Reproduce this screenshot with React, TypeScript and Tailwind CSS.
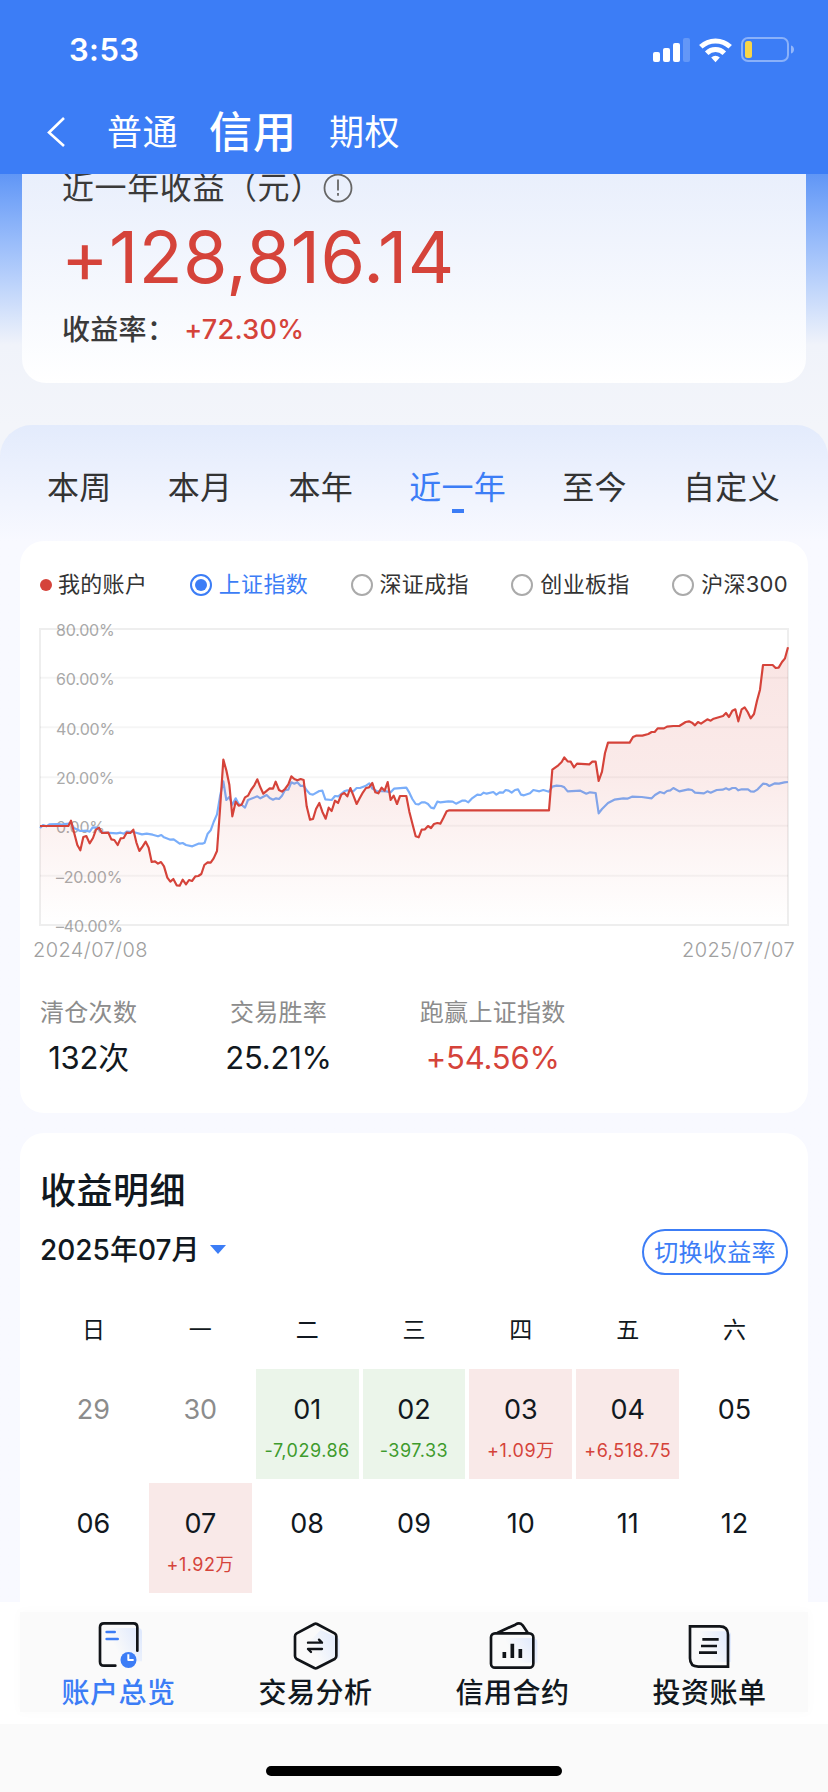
import { clsx } from 'clsx'

type Tone = 'up' | 'down'

interface Day {
  day: string
  muted?: boolean
  amount?: string
  tone?: Tone
}

const PERIODS = ['本周', '本月', '本年', '近一年', '至今', '自定义']
const INDEXES = ['上证指数', '深证成指', '创业板指', '沪深300']
const WEEKDAYS = ['日', '一', '二', '三', '四', '五', '六']
const Y_LABELS = ['80.00%', '60.00%', '40.00%', '20.00%', '0.00%', '–20.00%', '–40.00%']

const DAYS: Day[] = [
  { day: '29', muted: true },
  { day: '30', muted: true },
  { day: '01', amount: '-7,029.86', tone: 'down' },
  { day: '02', amount: '-397.33', tone: 'down' },
  { day: '03', amount: '+1.09万', tone: 'up' },
  { day: '04', amount: '+6,518.75', tone: 'up' },
  { day: '05' },
  { day: '06' },
  { day: '07', amount: '+1.92万', tone: 'up' },
  { day: '08' },
  { day: '09' },
  { day: '10' },
  { day: '11' },
  { day: '12' },
]

// Chart units: 2244 x 888, y = 0 is 80%, y = 888 is -40%
const ACCOUNT =
  '0,591 85,591 93,575 102,610 112,648 121,664 130,624 139,621 149,643 159,627 168,602 177,596 186,612 205,611 214,631 223,633 233,648 242,628 251,627 260,611 271,612 280,602 289,640 298,666 308,652 317,638 326,656 335,699 345,697 354,704 363,699 372,712 382,746 391,758 400,750 410,769 419,770 428,752 438,766 447,753 456,756 466,742 475,741 484,735 493,708 503,700 512,701 521,688 531,666 540,542 550,392 559,424 568,467 577,562 587,518 596,530 605,527 615,505 624,500 633,483 643,469 652,451 661,475 670,494 689,478 699,479 707,458 717,483 726,488 735,480 745,466 754,442 763,450 772,454 782,450 791,453 800,532 810,572 819,570 828,540 838,522 847,548 857,569 866,536 875,546 885,515 894,522 904,497 913,492 922,502 931,477 940,499 950,525 959,508 969,490 978,477 987,475 997,462 1006,490 1015,493 1025,476 1034,485 1043,459 1052,513 1061,500 1071,525 1080,501 1099,501 1108,548 1118,587 1127,622 1136,625 1145,602 1155,601 1164,591 1173,597 1182,585 1192,582 1201,584 1210,567 1220,547 1228,544 1527,544 1537,422 1555,409 1565,399 1573,385 1583,397 1592,398 1602,415 1611,404 1648,406 1657,398 1667,398 1676,456 1686,428 1695,372 1704,341 1769,341 1779,324 1788,320 1807,320 1825,315 1835,309 1844,309 1853,298 1872,298 1881,293 1900,291 1918,291 1937,279 1947,277 1956,281 1965,289 1974,279 1983,284 2002,271 2012,275 2021,269 2049,261 2058,252 2067,264 2077,245 2086,241 2095,277 2105,241 2114,235 2123,249 2132,268 2142,255 2151,215 2160,182 2169,108 2198,108 2207,117 2216,116 2226,99 2235,88 2244,55'

const INDEX =
  '0,597 9,588 19,592 28,586 56,585 65,587 84,584 93,582 102,597 121,606 140,605 149,608 158,595 170,596 186,610 230,613 242,611 252,614 260,608 280,609 306,616 320,614 338,617 354,622 364,618 372,625 391,632 401,631 419,644 428,642 438,648 457,652 475,644 487,644 494,641 503,614 512,604 521,579 531,556 540,502 550,457 559,513 568,504 577,527 587,508 596,525 605,528 615,536 624,513 652,502 661,508 680,498 689,507 699,512 708,508 717,510 726,500 735,483 745,482 754,460 763,464 772,460 782,471 791,470 800,484 810,495 819,497 838,486 847,485 856,511 875,513 885,501 895,502 913,487 922,484 940,487 950,477 960,477 978,470 988,463 997,479 1010,486 1040,487 1052,490 1062,479 1099,476 1108,491 1117,510 1127,525 1136,526 1145,520 1155,520 1164,525 1173,536 1182,538 1192,518 1201,520 1225,517 1238,518 1248,524 1266,515 1276,515 1285,520 1295,509 1312,497 1322,498 1331,491 1340,494 1360,489 1369,497 1379,490 1389,491 1397,483 1406,485 1415,491 1425,483 1434,481 1443,497 1452,499 1470,493 1480,483 1498,487 1510,483 1527,488 1537,473 1550,470 1564,471 1573,475 1583,487 1621,485 1639,494 1650,490 1667,492 1676,553 1686,540 1704,522 1723,512 1750,508 1762,509 1776,503 1805,504 1835,508 1845,498 1860,489 1872,493 1881,486 1891,484 1900,477 1918,487 1945,481 1956,483 1965,491 1992,493 2002,487 2012,491 2030,483 2048,482 2058,478 2067,482 2077,477 2087,477 2095,484 2105,481 2124,481 2132,487 2142,488 2153,481 2169,464 2179,465 2188,471 2205,463 2217,464 2233,460 2244,459'

function StatusBar() {
  return (
    <div className="flex h-[100px] items-center justify-between pr-[33px] pl-[69px]">
      <span className="text-[31px] font-semibold tracking-[0.4px]">3:53</span>
      <svg width="142" height="26" viewBox="0 0 142 26" fill="#fff">
        <rect x="0" y="15" width="7" height="10" rx="2" />
        <rect x="10" y="11" width="7" height="14" rx="2" />
        <rect x="20" y="6" width="7" height="19" rx="2" />
        <rect x="30" y="1" width="7" height="24" rx="2" opacity="0.2" />
        <g fill="none" stroke="#fff" strokeWidth="5">
          <path d="M47.8 9.8a21.2 21.2 0 0 1 29.4 0" />
          <path d="M53.7 16.2a12.5 12.5 0 0 1 17.6 0" />
        </g>
        <path d="M62.5 25.2l-4.3-4.6a6.2 6.2 0 0 1 8.6 0z" />
        <rect x="89" y="1" width="46" height="23" rx="6" fill="none" stroke="#fff" strokeOpacity="0.4" strokeWidth="2" />
        <rect x="92" y="4" width="7" height="17" rx="2.5" fill="#f8d548" />
        <path d="M138 8.5c4 1 4 7 0 8z" opacity="0.45" />
      </svg>
    </div>
  )
}

function Header() {
  return (
    <header className="h-[174px] bg-[#3c7df6] text-white">
      <StatusBar />
      <nav className="flex h-[64px] items-center pl-[46px]">
        <svg width="20" height="32" viewBox="0 0 20 32" fill="none" stroke="#fff" strokeWidth="2.6">
          <path d="M18 2L3 16.5 18 30" />
        </svg>
        <span className="ml-[41px] text-[35px] tracking-[0.5px]">普通</span>
        <span className="ml-[31px] text-[43px] font-medium tracking-[1px]">信用</span>
        <span className="ml-[32px] text-[35px] tracking-[0.5px]">期权</span>
      </nav>
    </header>
  )
}

function Summary() {
  return (
    <section className="h-[251px] bg-linear-to-b from-[#6096f6] via-[#f0f3fa] via-68% to-[#f3f5fa] px-[22px]">
      <div className="h-[209px] overflow-hidden rounded-b-[24px] bg-linear-to-b from-[#e9effc] to-white pl-[40px]">
        <div className="-mt-[6px] flex h-[40px] items-center text-[32px] tracking-[0.6px] text-[#3a3a3a]">
          近一年收益（元）
          <svg width="30" height="30" viewBox="0 0 30 30" fill="none" stroke="#666" strokeWidth="1.8">
            <circle cx="15" cy="15" r="13.5" />
            <path d="M15 6.5v11M15 20v2.8" />
          </svg>
        </div>
        <div className="mt-[13px] -ml-[1px] h-[72px] text-[72px] leading-[72px] tracking-[0.4px] text-[#d5433a]">+128,816.14</div>
        <div className="mt-[17px] flex h-[40px] items-center text-[28px] font-medium tracking-[0.3px] text-[#3a3a3a]">
          收益率：
          <span className="ml-[9px] text-[27px] text-[#d5433a]">+72.30%</span>
        </div>
      </div>
    </section>
  )
}

function Chart() {
  return (
    <div className="relative mx-[20px] mt-[18px] h-[297px]">
      <div className="absolute -top-[9px] left-[16px] flex h-[316px] flex-col justify-between text-[16px] leading-[20px] tracking-[-0.2px] text-[#aaa]">
        {Y_LABELS.map(label => (
          <span key={label}>{label}</span>
        ))}
      </div>
      <svg className="relative overflow-visible" width="748" height="296" viewBox="0 0 2244 888">
        <defs>
          <linearGradient id="area" x1="0" y1="0" x2="0" y2="1">
            <stop offset="0" stopColor="#d5433a" stopOpacity="0.14" />
            <stop offset="0.45" stopColor="#d5433a" stopOpacity="0.11" />
            <stop offset="1" stopColor="#d5433a" stopOpacity="0" />
          </linearGradient>
        </defs>
        <g stroke="#000" strokeOpacity="0.04" strokeWidth="6">
          {[146, 295, 445, 590, 740].map(y => (
            <path key={y} d={`M0 ${y}H2244`} />
          ))}
        </g>
        <rect width="2244" height="888" fill="none" stroke="#000" strokeOpacity="0.065" strokeWidth="6" />
        <polyline points={INDEX} fill="none" stroke="#7aaefa" strokeWidth="6.5" strokeLinejoin="round" />
        <polygon points={`0,888 ${ACCOUNT} 2244,888`} fill="url(#area)" />
        <polyline points={ACCOUNT} fill="none" stroke="#d5433a" strokeWidth="6.5" strokeLinejoin="round" />
      </svg>
    </div>
  )
}

function Stat({ label, value, className }: { label: string; value: string; className?: string }) {
  return (
    <div className="flex flex-col items-center">
      <span className="text-[24px] leading-[36px] tracking-[0.3px] text-[#8c8c8c]">{label}</span>
      <span className={clsx('mt-[7px] text-[31px] leading-[40px] tracking-[-0.2px]', className ?? 'text-[#111820]')}>
        {value}
      </span>
    </div>
  )
}

function Performance() {
  return (
    <div className="mx-[20px] h-[572px] rounded-[24px] bg-white">
      <div className="flex h-[70px] items-center justify-between px-[20px] pt-[17px] text-[22px] tracking-[0.3px] text-[#333]">
        <div className="flex items-center gap-[6px]">
          <span className="size-[12px] rounded-full bg-[#d5433a]" />
          我的账户
        </div>
        {INDEXES.map((name, i) => (
          <div key={name} className={clsx('flex items-center gap-[7px]', i === 0 && 'text-[#3c7df6]')}>
            <span
              className={clsx(
                'flex size-[22px] items-center justify-center rounded-full border-2',
                i === 0 ? 'border-[#3c7df6]' : 'border-[#aaa]',
              )}
            >
              {i === 0 && <span className="size-[12px] rounded-full bg-[#3c7df6]" />}
            </span>
            {name}
          </div>
        ))}
      </div>
      <Chart />
      <div className="flex justify-between pt-[8px] pr-[13px] pl-[13px] text-[20px] leading-[32px] font-light tracking-[0.4px] text-[#a0a0a0]">
        <span>2024/07/08</span>
        <span>2025/07/07</span>
      </div>
      <div className="mt-[29px] flex gap-[88px] pl-[20px]">
        <Stat label="清仓次数" value="132次" />
        <Stat label="交易胜率" value="25.21%" />
        <Stat label="跑赢上证指数" value="+54.56%" className="text-[#d5433a]" />
      </div>
    </div>
  )
}

function Detail() {
  return (
    <div className="mx-[20px] mt-[20px] h-[469px] rounded-t-[24px] bg-white px-[20px] pt-[32px]">
      <h2 className="text-[36px] leading-[52px] font-medium tracking-[0.5px] text-[#111820]">收益明细</h2>
      <div className="mt-[9px] flex h-[52px] items-center justify-between">
        <div className="-mt-[5px] flex items-center text-[28px] font-medium text-[#111820]">
          2025年07月
          <svg className="ml-[11px]" width="16" height="9" viewBox="0 0 16 9">
            <path d="M0 0h16L8 9z" fill="#3c7df6" />
          </svg>
        </div>
        <button className="h-[46px] w-[146px] rounded-full border-2 border-[#3c7df6] text-[24px] leading-[43px] tracking-[0.3px] whitespace-nowrap text-[#3c7df6]">
          切换收益率
        </button>
      </div>
      <div className="mt-[28px] grid h-[62px] grid-cols-7 gap-x-[4px] px-[2px] text-center text-[23px] leading-[49px] text-[#111820]">
        {WEEKDAYS.map(name => (
          <span key={name}>{name}</span>
        ))}
      </div>
      <div className="mt-[1px] grid grid-cols-7 gap-[4px] px-[2px]">
        {DAYS.map(({ day, muted, amount, tone }) => (
          <div
            key={day}
            className={clsx(
              'flex h-[110px] flex-col items-center pt-[21px]',
              tone === 'up' && 'bg-[#f9e9e8]',
              tone === 'down' && 'bg-[#ebf5ea]',
            )}
          >
            <span className={clsx('text-[27px] leading-[40px]', muted ? 'text-[#8c8c8c]' : 'text-[#111820]')}>{day}</span>
            <span
              className={clsx(
                'mt-[9px] text-[18px] leading-[24px] tracking-[0.5px]',
                tone === 'up' ? 'text-[#d5433a]' : 'text-[#3e9b2d]',
              )}
            >
              {amount}
            </span>
          </div>
        ))}
      </div>
    </div>
  )
}

function Shade({ d, id }: { d: string; id: string }) {
  return (
    <>
      <linearGradient id={id} x1="1" y1="0.2" x2="0.2" y2="0.6">
        <stop offset="0" stopColor="#dfe9fd" />
        <stop offset="1" stopColor="#dfe9fd" stopOpacity="0" />
      </linearGradient>
      <path d={d} fill={`url(#${id})`} stroke="none" />
    </>
  )
}

const NAV = [
  {
    label: '账户总览',
    icon: (
      <>
        <Shade id="shade-overview" d="M50 30h88q12 0 12 12v88H50z" />
        <path d="M136 98V28q0-12-12-12H36q-12 0-12 12v103q0 12 12 12h34" />
        <path d="M44 42h24M44 63h33" stroke="#3c7df6" />
        <circle cx="109.5" cy="126" r="24" fill="#3c7df6" stroke="none" />
        <path d="M109 109v17h16" stroke="#fff" strokeWidth="6" strokeLinecap="butt" />
      </>
    ),
  },
  {
    label: '交易分析',
    icon: (
      <>
        <Shade id="shade-trade" d="M95 36l50 22q7 4 7 12v50l-60 20-40-60z" />
        <path d="M84 18l53 28q5 3 5 9v59q0 6-5 9l-53 27q-4 2-8 0L23 123q-5-3-5-9V55q0-6 5-9l53-28q4-2 8 0z" />
        <path d="M57 74h42l-9-9M99 93H57l9 9" strokeWidth="7" />
      </>
    ),
  },
  {
    label: '信用合约',
    icon: (
      <>
        <Shade id="shade-credit" d="M60 60h80q14 0 14 14v60H60z" />
        <path d="M35 44L88 20q13-8 22 2l15 22" />
        <rect x="15" y="46" width="127" height="103" rx="12" />
        <path d="M55 102v18M79 77v43M103 93v27" strokeWidth="11" strokeLinecap="butt" />
      </>
    ),
  },
  {
    label: '投资账单',
    icon: (
      <>
        <Shade id="shade-bill" d="M50 40h82q12 0 12 12v80H50z" />
        <path d="M21 25h89q25 0 25 25v96H46q-25 0-25-25z" strokeLinejoin="miter" />
        <path d="M58 64h49M54 84h48M48 104h54" strokeLinecap="butt" />
      </>
    ),
  },
]

function TabBar() {
  return (
    <footer className="flex-1 bg-[#fafafa]">
      <div className="h-[122px] bg-white px-[20px] pt-[10px]">
        <div className="grid h-[100px] grid-cols-4 bg-[#fafafa] shadow-[0_0_10px_2px_#fcfcfc]">
          {NAV.map(({ label, icon }, i) => (
            <div key={label} className="flex flex-col items-center pt-[6px]">
              <svg
                width="54"
                height="54"
                viewBox="0 0 162 162"
                fill="none"
                stroke="#111418"
                strokeWidth="8"
                strokeLinecap="round"
                strokeLinejoin="round"
              >
                {icon}
              </svg>
              <span
                className={clsx(
                  'mt-[1px] text-[28px] leading-[40px] font-medium tracking-[0.5px]',
                  i === 0 ? 'text-[#3c7df6]' : 'text-[#111820]',
                )}
              >
                {label}
              </span>
            </div>
          ))}
        </div>
      </div>
      <div className="mx-auto mt-[42px] h-[10px] w-[296px] rounded-full bg-black" />
    </footer>
  )
}

export default function App() {
  return (
    <div className="flex h-[1792px] w-[828px] flex-col overflow-hidden bg-[#f3f5fa] font-['Inter','Noto_Sans_CJK_SC',sans-serif]">
      <Header />
      <Summary />
      <section className="rounded-t-[32px] bg-[#f8f9ff] bg-linear-to-b from-[#e3ebfc] to-[#f8f9ff] to-[116px]">
        <div className="flex h-[116px] justify-between pt-[39px] pr-[48px] pl-[47px] text-[32px] leading-[48px] tracking-[0.3px] text-[#333]">
          {PERIODS.map(name => {
            const active = name === '近一年'
            return (
              <div key={name} className={clsx('flex flex-col items-center', active && 'text-[#3c7df6]')}>
                {name}
                {active && <span className="-mt-[3px] h-[4px] w-[12px] bg-[#3c7df6]" />}
              </div>
            )
          })}
        </div>
        <Performance />
        <Detail />
      </section>
      <TabBar />
    </div>
  )
}
